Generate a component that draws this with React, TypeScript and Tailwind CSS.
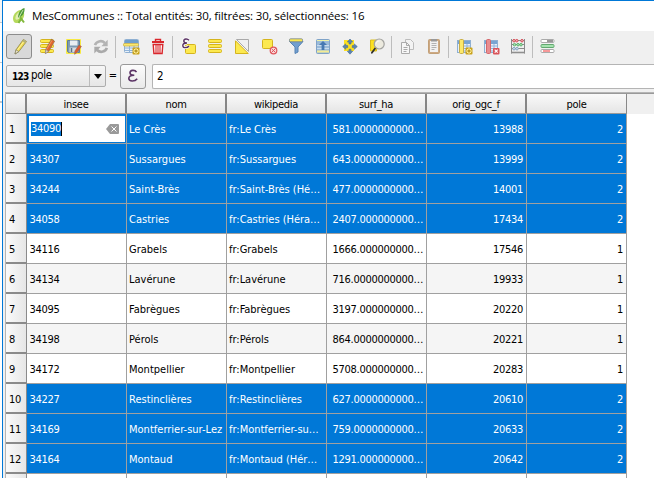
import React from "react";

const ui = "font-['DejaVu_Sans_Condensed','DejaVu_Sans',sans-serif]";

type Row = { id: string; nom: string; wiki: string; surf: string; orig: string; pole: string };

const rows: Row[] = [
  { id: "34090", nom: "Le Crès", wiki: "fr:Le Crès", surf: "581.0000000000…", orig: "13988", pole: "2" },
  { id: "34307", nom: "Sussargues", wiki: "fr:Sussargues", surf: "643.0000000000…", orig: "13999", pole: "2" },
  { id: "34244", nom: "Saint-Brès", wiki: "fr:Saint-Brès (Hé…", surf: "477.0000000000…", orig: "14001", pole: "2" },
  { id: "34058", nom: "Castries", wiki: "fr:Castries (Héra…", surf: "2407.000000000…", orig: "17434", pole: "2" },
  { id: "34116", nom: "Grabels", wiki: "fr:Grabels", surf: "1666.000000000…", orig: "17546", pole: "1" },
  { id: "34134", nom: "Lavérune", wiki: "fr:Lavérune", surf: "716.0000000000…", orig: "19933", pole: "1" },
  { id: "34095", nom: "Fabrègues", wiki: "fr:Fabrègues", surf: "3197.000000000…", orig: "20220", pole: "1" },
  { id: "34198", nom: "Pérols", wiki: "fr:Pérols", surf: "864.0000000000…", orig: "20221", pole: "1" },
  { id: "34172", nom: "Montpellier", wiki: "fr:Montpellier", surf: "5708.000000000…", orig: "20283", pole: "1" },
  { id: "34227", nom: "Restinclières", wiki: "fr:Restinclières", surf: "627.0000000000…", orig: "20610", pole: "2" },
  { id: "34169", nom: "Montferrier-sur-Lez", wiki: "fr:Montferrier-su…", surf: "759.0000000000…", orig: "20633", pole: "2" },
  { id: "34164", nom: "Montaud", wiki: "fr:Montaud (Hér…", surf: "1291.000000000…", orig: "20642", pole: "2" },
];

const headers = ["insee", "nom", "wikipedia", "surf_ha", "orig_ogc_f", "pole"];

function Tool({ children, active = false }: { children: React.ReactNode; active?: boolean }) {
  return (
    <div
      className={
        active
          ? "flex h-[25px] w-[26px] mr-px shrink-0 items-center justify-center rounded-[3px] border border-[#8c8c8c] bg-[#d9d9d9]"
          : "flex h-[25px] w-[27px] shrink-0 items-center justify-center"
      }
    >
      <svg width="19" height="19" viewBox="0 0 19 19" fill="none" className="shrink-0">
        {children}
      </svg>
    </div>
  );
}

const Sep = () => (
  <div className="flex w-[3px] shrink-0 justify-center">
    <div className="h-[22px] w-px bg-[#bdbdbd]" />
  </div>
);

function Bars() {
  return (
    <g fill="#fce94f" stroke="#d5b41d" strokeWidth="1">
      <rect x="3.5" y="2.5" width="13" height="3" rx="1" />
      <rect x="3.5" y="7.5" width="13" height="3" rx="1" />
      <rect x="3.5" y="12.5" width="13" height="3" rx="1" />
    </g>
  );
}

function OrangePencil() {
  return (
    <g>
      <path d="M14.5 2.2 17.6 4.2 11.8 14.2 8.4 16.6 8.6 12.4z" fill="#e0662e" stroke="#8f6b50" strokeWidth=".7" />
      <path d="M15 3.4 9.5 12.6" stroke="#f4a070" strokeWidth=".8" />
      <path d="m8.6 12.6 3 1.7-3.2 2.3z" fill="#d9d3c0" stroke="#8a8a82" strokeWidth=".5" />
    </g>
  );
}

function Gear() {
  return (
    <g>
      <rect x="11.5" y="10.5" width="7" height="7" rx="1" fill="#c9a21d" />
      <path d="M15 11v6M12 14h6M13 12l4 4M17 12l-4 4" stroke="#fff0a0" strokeWidth="1" />
      <circle cx="15" cy="14" r="1.1" fill="#a88510" />
    </g>
  );
}

function Column({ color, edge }: { color: string; edge: string }) {
  return (
    <g>
      <rect x="3.5" y="3.5" width="13" height="12" fill="#e8f0f8" stroke="#8fb0d2" />
      <path d="M4 4h12v3H4z" fill="#79a5d2" />
      <path d="M10 9h6M10 11.5h6M10 14h3M13 7v8" stroke="#90b4da" strokeWidth="1" />
      <rect x="5.5" y="2.5" width="4" height="14" rx="1" fill={color} stroke={edge} />
    </g>
  );
}

function Toolbar() {
  return (
    <div className="flex h-[30px] shrink-0 items-center pl-[3px] pt-px">
      <Tool active>
        <path d="M13.4 2.4 16.5 4.5 8.8 14.6 5 17l1-4.2z" fill="#f1dc50" stroke="#8b8448" strokeWidth=".8" />
        <path d="M14.5 3.6 7.5 13" stroke="#fff3a0" />
        <path d="m6 12.8 2.8 1.8L5 17z" fill="#eee9cf" stroke="#77735c" strokeWidth=".6" />
        <path d="m13.4 2.4 3.1 2.1-1.3 1.7-3-2.2z" fill="#b6b178" />
      </Tool>
      <Tool><Bars /><OrangePencil /></Tool>
      <Tool>
        <rect x="2" y="2" width="15" height="15" rx="1" fill="#f7e943" />
        <path d="M3.5 3.5h12v12h-11l-1-1z" fill="#7d9ab2" stroke="#627e95" />
        <rect x="6" y="3.5" width="7.5" height="5" fill="#e9eef2" />
        <rect x="5.5" y="10.5" width="8" height="5" fill="#d5dce2" />
        <path d="M7.5 11v4" stroke="#5b7488" strokeWidth="1.5" />
        <path d="M15 8 17.4 9.4 13 15.5l-2.4 1.8.3-3.3z" fill="#df5930" stroke="#95664b" strokeWidth=".6" />
      </Tool>
      <Tool>
        <path d="M4 8.2C5 4.4 10.5 2.6 13.8 6" stroke="#b3b3b3" strokeWidth="2.6" />
        <path d="M16.7 2.7v6.5h-6.4z" fill="#b3b3b3" />
        <path d="M15.8 10.8c-1 3.8-6.3 5.6-9.7 2.2" stroke="#aaa" strokeWidth="2.6" />
        <path d="M3.3 16.4V9.8h6.4z" fill="#aaa" />
      </Tool>
      <Sep />
      <Tool>
        <rect x="3.5" y="2.5" width="14" height="13" rx="1" fill="#e8f0f8" stroke="#8fb0d2" />
        <path d="M4 3h13v3H4z" fill="#6f9fcd" />
        <path d="M4 11h13M4 13.5h9M8.5 9v6M13 9v6" stroke="#90b4da" />
        <rect x="2.5" y="6.5" width="15" height="2.5" rx=".8" fill="#fbe96c" stroke="#c8ad47" strokeWidth=".8" />
        <Gear />
      </Tool>
      <Tool>
        <path d="M7.5 4V2.5h5V4" stroke="#d9272c" strokeWidth="1.4" />
        <path d="M4 5h12" stroke="#d9272c" strokeWidth="2" />
        <path d="M5.2 7.5h9.6l-.7 9H5.9z" fill="#fff" stroke="#d9272c" strokeWidth="1.4" />
        <path d="M8 8v8M10 8v8M12 8v8" stroke="#d9272c" strokeWidth="1.1" />
      </Tool>
      <Sep />
      <Tool>
        <rect x="7.5" y="7.5" width="10" height="9" rx="1" fill="#fce94f" stroke="#d5b41d" />
        <path d="M11 3.2C9.5 1.4 5.8 1.4 5.8 4c0 1.2 1 2 3.2 2C6 6 4.8 7 4.8 8.4c0 3.2 4.8 2.6 6.2.6" stroke="#fff" strokeWidth="2.8" />
        <path d="M11 3.2C9.5 1.4 5.8 1.4 5.8 4c0 1.2 1 2 3.2 2C6 6 4.8 7 4.8 8.4c0 3.2 4.8 2.6 6.2.6" stroke="#5c3566" strokeWidth="1.4" />
      </Tool>
      <Tool><Bars /></Tool>
      <Tool>
        <path d="M4.5 2.5h12v12z" fill="#f0f0f0" stroke="#a9a9a9" />
        <path d="M3.5 3.8v12.7h12.7z" fill="#fce94f" stroke="#d5b41d" />
      </Tool>
      <Tool>
        <rect x="3.5" y="2.5" width="10" height="9" rx="1" fill="#fce94f" stroke="#d5b41d" />
        <circle cx="14.5" cy="13.5" r="3.3" fill="#f8dada" stroke="#df565c" strokeWidth="1.2" />
        <path d="m12.5 15.5 4-4M12.8 12l3.5 3.3" stroke="#df565c" strokeWidth="1" />
      </Tool>
      <Tool>
        <path d="M3.5 4.5 9 10v6.5l3-1.5v-5l5-5.5z" fill="#729fcf" stroke="#5482b5" />
        <rect x="3.5" y="1.8" width="13" height="3" rx="1" fill="#fce94f" stroke="#718293" strokeWidth=".8" />
      </Tool>
      <Tool>
        <rect x="3.5" y="2.5" width="13" height="14" rx="1" fill="#9bbbd9" stroke="#7fa3c8" />
        <path d="M4 8.5h12M4 11.5h12" stroke="#c9dcee" />
        <path d="M4 3.5h12" stroke="#eef3a6" />
        <path d="M4 14.5h12" stroke="#f4ec93" strokeWidth="2" />
        <path d="m10 4 4 4h-2.600v5H8.600V8H6z" fill="#4679b2" />
      </Tool>
      <Tool>
        <rect x="4" y="3" width="10" height="11" fill="#fce021" />
        <g fill="#5b84b0" stroke="#446c99" strokeWidth=".6">
          <path d="m10 2 2.700 3h-1.700v2H9V5H7.300zM10 17.200l-2.700-3H9v-2h2v2h1.700zM2.700 9.600l3-2.700v1.700h2v2h-2v1.700zM17.300 9.600l-3 2.700v-1.700h-2v-2h2V6.900z" />
        </g>
      </Tool>
      <Tool>
        <path d="M3.500 3h6v11h-6z" fill="#fce021" stroke="#d9bc20" />
        <path d="m8.200 11.200-3.300 4.600" stroke="#2f2f2f" strokeWidth="1.800" strokeLinecap="round" />
        <circle cx="12.200" cy="7" r="5" fill="#eceadf" stroke="#a3a39f" strokeWidth="1.200" />
        <path d="M9.300 6.500c.4-1.800 1.800-2.600 3.200-2.500" stroke="#fff" />
      </Tool>
      <Sep />
      <Tool>
        <path d="M8.500 2.500h5l3 3v7h-8z" fill="#f3f3f3" stroke="#bcbcbc" />
        <path d="M4.500 5.500h5l3 3v8h-8z" fill="#f7f7f7" stroke="#ababab" />
        <path d="M9.500 5.500v3h3M6.500 10.500h4M6.500 12.500h4M6.500 14.500h3" stroke="#aaa" />
      </Tool>
      <Tool>
        <rect x="4.500" y="2.500" width="11" height="14" rx="1" fill="#cda983" stroke="#c2a078" />
        <rect x="6" y="4" width="8" height="11" fill="#f1f1f1" />
        <rect x="7" y="2" width="6" height="2.500" fill="#999" />
        <path d="M7.500 6.500h5M7.500 8.500h5M7.500 10.500h5M7.500 12.500h3" stroke="#b2b2b2" />
      </Tool>
      <Sep />
      <Tool><Column color="#fce96a" edge="#c8ad47" /><Gear /></Tool>
      <Tool>
        <Column color="#e98d90" edge="#d4686c" />
        <rect x="12" y="11" width="6.500" height="6.500" rx="1" fill="#d9545a" />
        <path d="m13.700 12.700 3 3m0-3-3 3" stroke="#fff" strokeWidth="1.200" />
      </Tool>
      <Tool>
        <path d="M3.500 2v14.500M16.500 2v14.500M3 3.500h14M3 7.500h14M3 11.500h14" stroke="#8a8a8a" />
        <path d="M3 15.500h14" stroke="#8f8f8f" strokeWidth="1.600" />
        <g fill="#f0b0b4" stroke="#cf3c48" strokeWidth=".8">
          <circle cx="6" cy="3.700" r="1.300" /><circle cx="8.800" cy="3.700" r="1.300" /><circle cx="14" cy="3.700" r="1.300" />
        </g>
        <g fill="#a6e0ae" stroke="#4daa60" strokeWidth=".8">
          <circle cx="6.500" cy="7.700" r="1.300" /><circle cx="10" cy="7.700" r="1.300" /><circle cx="13" cy="7.700" r="1.300" />
        </g>
        <g fill="#cfe0f0" stroke="#7998b8" strokeWidth=".8">
          <circle cx="6" cy="11.700" r="1.300" /><circle cx="9" cy="11.700" r="1.300" />
        </g>
      </Tool>
      <Sep />
      <Tool>
        <rect x="3" y="2.500" width="13" height="3" rx="1" fill="#fff" stroke="#aaa" />
        <rect x="3" y="7.500" width="13" height="3" rx="1" fill="#a4e3ae" stroke="#63a871" />
        <rect x="3" y="12.500" width="13" height="3" rx="1" fill="#fff" stroke="#aaa" />
        <path d="M9 4h6" stroke="#333" /><path d="M5 14h7" stroke="#e33" />
      </Tool>
    </div>
  );
}

function FieldBar() {
  return (
    <div className={`${ui} flex h-[30px] shrink-0 items-center pl-[3px] text-[11px] text-black`}>
      <div className="flex h-[22px] w-[100px] shrink-0 items-center rounded-[2px] border border-[#adadad] bg-linear-to-b from-[#f6f6f6] to-[#e6e6e6]">
        <span className="w-[23px] shrink-0 pl-[5px] text-[10px] font-bold tracking-[-0.8px]">123</span>
        <span className="flex-1 pl-px text-[11.5px] tracking-[-0.3px]">pole</span>
        <div className="flex h-full w-[16px] items-center justify-center border-l border-[#bcbcbc]">
          <svg width="8" height="5" viewBox="0 0 8 5"><path d="M0 0h8L4 5z" fill="#000" /></svg>
        </div>
      </div>
      <span className="w-[14px] shrink-0 text-center text-[11px]">=</span>
      <div className="flex h-[25px] w-[26px] shrink-0 items-center justify-center rounded-[3px] border border-[#999] bg-linear-to-b from-[#fcfcfc] to-[#e9e9e9]">
        <svg width="12" height="14" viewBox="0 0 12 14" fill="none">
          <path d="M9.500 3.200C8 .6 3 .8 3 3.800c0 1.800 1.500 2.500 4.300 2.500C3.500 6.300 1.800 7.400 1.800 9.300c0 3.700 6.200 3.400 8.400.5" stroke="#5c3566" strokeWidth="1.600" />
        </svg>
      </div>
      <div className="ml-[6px] flex h-[25px] flex-1 items-center rounded-l-[2px] border border-r-0 border-[#b4b4b4] bg-white pl-1 pt-0.5 text-[11.5px]">2</div>
    </div>
  );
}

function HeaderCell({ label, last }: { label: string; last: boolean }) {
  return (
    <div
      className={`flex h-5 w-[100px] shrink-0 items-center justify-center border-b border-[#999] bg-linear-to-b from-[#fafafa] to-[#e5e5e5] pt-[3px] text-black ${last ? "border-r border-r-[#888]" : "border-r-2 border-r-[#858585]"}`}
    >
      {label}
    </div>
  );
}

const cell = "flex h-full w-[100px] shrink-0 items-center overflow-hidden whitespace-nowrap border-r border-[#a0a0a0]";
const textCell = `${cell} pt-[3px]`;

function TableRow({ row, index }: { row: Row; index: number }) {
  const selected = row.pole === "2";
  const tone = selected ? "bg-[#0078d7] text-white" : index % 2 ? "bg-[#f5f5f5] text-black" : "bg-white text-black";
  return (
    <div className="flex h-[30px] shrink-0">
      <div className="flex h-[30px] w-[21px] shrink-0 items-center border-r border-b-2 border-[#8a8a8a] bg-linear-to-r from-[#fafafa] to-[#e6e6e6] pl-[3px] pt-1 text-black">
        {index + 1}
      </div>
      <div className={`flex h-[30px] border-b border-[#a0a0a0] ${tone}`}>
        {index === 0 ? (
          <div className={`${cell} pt-px pl-0.5`}>
            <div className="flex h-[26px] w-[96px] items-center justify-between bg-white pl-[2px] pr-[6px]">
              <span className="border-r border-black bg-[#0078d7] leading-[14px]">34090</span>
              <svg width="13" height="10" viewBox="0 0 13 10" fill="none">
                <path d="M4 0h8q1 0 1 1v8q0 1-1 1H4L0 5z" fill="#9a9a9a" />
                <path d="m5.500 2.500 5 5m0-5-5 5" stroke="#fff" strokeWidth="1" />
              </svg>
            </div>
          </div>
        ) : (
          <div className={`${textCell} pl-[2.5px]`}>{row.id}</div>
        )}
        <div className={`${textCell} pl-0.5 tracking-[0.01px]`}>{row.nom}</div>
        <div className={`${textCell} pl-[2px] tracking-[-0.02px]`}>{row.wiki}</div>
        <div className={`${textCell} justify-end pr-[3px]`}>{row.surf}</div>
        <div className={`${textCell} justify-end pr-[3px]`}>{row.orig}</div>
        <div className={`${textCell} justify-end pr-[3px]`}>{row.pole}</div>
      </div>
    </div>
  );
}

function AttributeTable() {
  return (
    <div className={`${ui} ml-0.5 mt-px flex min-h-0 flex-1 flex-col overflow-hidden border-l border-t border-[#b5b5b5] bg-white text-[11px] tracking-[-0.3px]`}>
      <div className="flex h-[21px] shrink-0 border-t border-[#999] bg-[#f0f0f0]">
        <div className="h-5 w-[21px] shrink-0 border-r-2 border-b border-[#858585] bg-linear-to-b from-[#fafafa] to-[#e5e5e5]" />
        {headers.map((h, i) => <HeaderCell key={h} label={h} last={i === 5} />)}
      </div>
      {rows.map((r, i) => <TableRow key={r.id} row={r} index={i} />)}
      <div className="flex h-[30px] shrink-0">
        <div className="w-[21px] border-r border-[#8a8a8a] bg-linear-to-r from-[#fafafa] to-[#e6e6e6]" />
        {headers.map((h) => <div key={h} className={cell} />)}
      </div>
    </div>
  );
}

export default function App() {
  return (
    <div className="flex h-[478px] w-[654px] overflow-hidden bg-white">
      <div className="flex w-0.5 shrink-0 flex-col">
        <div className="h-[23px] border-b border-[#c8c8c8] bg-[#f5f5f5]" />
        <div className="h-10 border-b border-[#c8c8c8]" />
        <div className="h-10 border-b-2 border-[#c8c8c8]" />
      </div>
      <div className="flex min-w-0 flex-1 flex-col border-l border-t border-[#0078d7] bg-[#f0f0f0]">
        <div className="flex h-[30px] shrink-0 items-center bg-white">
          <svg className="ml-[9px] shrink-0" width="15" height="18" viewBox="0 0 15 18" fill="none">
            <path d="M8 3C4 4 1 8 1 11.500S3 17 6.500 15.500C10 14 13 10 12 6z" fill="#b6d95c" />
            <path d="M7 5c-3 2-4 5-3.500 7 .6 2 4 0 5.500-3" fill="#e3efb0" />
            <path d="M12.500 1C8 2 6 7 6 11l2-1c3-1 5-5 4.500-9z" fill="#4e9c38" />
            <path d="m8 10 4 5.500M9 12l-2.500 4" stroke="#81b83c" strokeWidth="2" />
            <path d="m6 12 5-9" stroke="#e6efc7" strokeWidth=".8" />
          </svg>
          <span className="ml-[5px] whitespace-nowrap font-['Open_Sans','Noto_Sans',sans-serif] text-[11.5px] tracking-[-0.14px] text-black">
            MesCommunes :: Total entités: 30, filtrées: 30, sélectionnées: 16
          </span>
        </div>
        <Toolbar />
        <FieldBar />
        <AttributeTable />
      </div>
    </div>
  );
}
